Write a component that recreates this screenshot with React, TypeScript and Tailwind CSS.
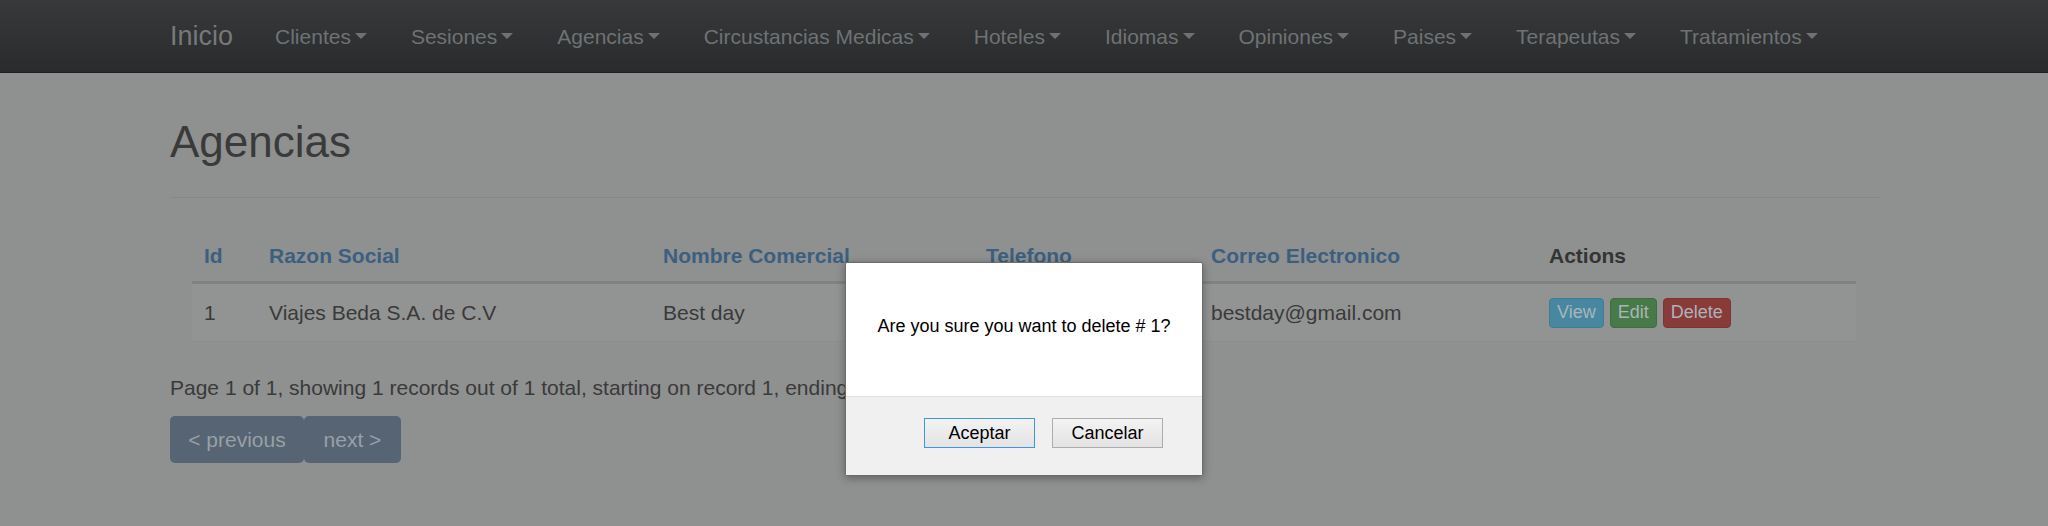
const navItems = [
  "Clientes",
  "Sesiones",
  "Agencias",
  "Circustancias Medicas",
  "Hoteles",
  "Idiomas",
  "Opiniones",
  "Paises",
  "Terapeutas",
  "Tratamientos",
];

const columns = [
  { label: "Id", width: "w-[65px]", link: true },
  { label: "Razon Social", width: "w-[394px]", link: true },
  { label: "Nombre Comercial", width: "w-[323px]", link: true },
  { label: "Telefono", width: "w-[225px]", link: true },
  { label: "Correo Electronico", width: "w-[338px]", link: true },
  { label: "Actions", width: "w-[319px]", link: false },
];

function Caret() {
  return (
    <span className="ml-[4px] inline-block h-0 w-0 border-x-[6px] border-t-[6px] border-x-transparent border-t-current align-middle" />
  );
}

function Navbar() {
  return (
    <div className="flex h-[73px] items-center border-b border-[#1e1f20] bg-gradient-to-b from-[#38393a] to-[#2a2b2c] pl-[148px]">
      <span className="pl-[22px] pr-[20px] text-[27px] leading-none text-[#76797c]">
        Inicio
      </span>
      {navItems.map((item) => (
        <span
          key={item}
          className="flex items-center px-[22px] text-[21px] leading-none text-[#6e7275]"
        >
          {item}
          <Caret />
        </span>
      ))}
    </div>
  );
}

function ConfirmDialog() {
  return (
    <div className="absolute left-[845px] top-[262px] flex h-[214px] w-[358px] flex-col overflow-hidden rounded-[2px] border border-[#6c6c6c] bg-white shadow-[0_2px_8px_rgba(0,0,0,0.35)] font-['Liberation_Sans',Arial,sans-serif]">
      <div className="flex h-[133px] items-center justify-center pb-[6px] text-[18px] text-black">
        Are you sure you want to delete # 1?
      </div>
      <div className="flex flex-1 items-start justify-end gap-[17px] border-t border-[#dfdfdf] bg-[#f0f0f0] pr-[39px] pt-[21px]">
        <button className="h-[30px] w-[111px] border border-[#3c95e6] bg-gradient-to-b from-[#f3f3f3] to-[#e3e3e3] text-[18px] text-black">
          Aceptar
        </button>
        <button className="h-[30px] w-[111px] border border-[#adadad] bg-gradient-to-b from-[#f3f3f3] to-[#e3e3e3] text-[18px] text-black">
          Cancelar
        </button>
      </div>
    </div>
  );
}

export default function App() {
  return (
    <div className="relative h-[526px] w-[2048px] overflow-hidden bg-[#8f9090] font-['Liberation_Sans',Arial,sans-serif] text-[#3a3a3a]">
      <Navbar />

      <div className="pl-[170px] pr-[168px]">
        {/* Page header */}
        <div className="border-b border-[#878888] pb-[31px] pt-[45px]">
          <h2 className="text-[44px] leading-[48px] text-[#3a3a3a]">Agencias</h2>
        </div>

        {/* Table */}
        <div className="ml-[22px] mt-[32px] w-[1664px]">
          <div className="flex h-[54px] items-center border-b-[3px] border-[#808181] pt-[1px]">
            {columns.map((col) => (
              <div
                key={col.label}
                className={`${col.width} px-[12px] text-[21px] font-bold ${
                  col.link ? "text-[#3c5f80]" : "text-[#333434]"
                }`}
              >
                {col.label}
              </div>
            ))}
          </div>
          <div className="flex h-[58px] items-center border-b border-[#8c8d8d] bg-[#929393] text-[21px]">
            <div className="w-[65px] px-[12px]">1</div>
            <div className="w-[394px] px-[12px]">Viajes Beda S.A. de C.V</div>
            <div className="w-[323px] px-[12px]">Best day</div>
            <div className="w-[225px] px-[12px]"></div>
            <div className="w-[338px] px-[12px]">bestday@gmail.com</div>
            <div className="flex w-[319px] gap-[6px] px-[12px] text-[18px] text-[#aab5b9]">
              <span className="flex h-[30px] items-center rounded-[4px] border border-[#3f7e92] bg-[#4788a0] px-[7px]">
                View
              </span>
              <span className="flex h-[30px] items-center rounded-[4px] border border-[#3f6d40] bg-[#477a48] px-[7px]">
                Edit
              </span>
              <span className="flex h-[30px] items-center rounded-[4px] border border-[#7b3534] bg-[#893b3a] px-[7px]">
                Delete
              </span>
            </div>
          </div>
        </div>

        {/* Paging */}
        <p className="mt-[31px] text-[21px] leading-[29px]">
          Page 1 of 1, showing 1 records out of 1 total, starting on record 1, ending on 1
        </p>
        <div className="mt-[14px] flex text-[21px] text-[#98a0a7]">
          <span className="flex h-[47px] w-[134px] items-center justify-center rounded-[5px] bg-[#566473]">
            &lt; previous
          </span>
          <span className="flex h-[47px] w-[97px] items-center justify-center rounded-[5px] bg-[#566473]">
            next &gt;
          </span>
        </div>
      </div>

      <ConfirmDialog />
    </div>
  );
}
